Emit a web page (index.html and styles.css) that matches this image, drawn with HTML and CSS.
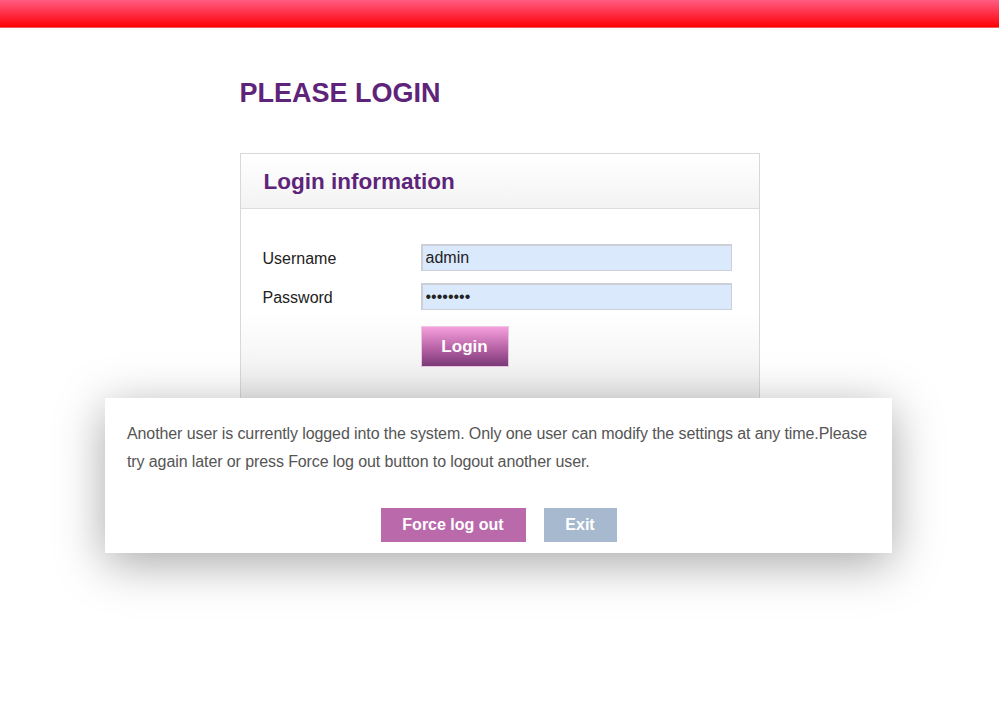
FILE: index.html
```html
<!DOCTYPE html>
<html lang="en">

<head>
    <meta charset="UTF-8">
    <meta name="viewport" content="width=device-width, initial-scale=1.0">
    <title>Login</title>

    <link rel="stylesheet" href="styles.css">

</head>

<body>
    <div class="top-bar"></div>

    <div class="page">
        <h1 class="page-title">PLEASE LOGIN</h1>

        <div class="login-box">
            <div class="login-header">
                <h2>Login information</h2>
            </div>

            <div class="login-body">
                <div class="form-row">
                    <label for="username">Username</label>
                    <input type="text" id="username" class="text-input" value="admin">
                </div>
                <div class="form-row">
                    <label for="password">Password</label>
                    <input type="password" id="password" class="text-input" value="password">
                </div>
                <div class="form-row">
                    <span class="label-space"></span>
                    <button class="login-button">Login</button>
                </div>
            </div>
        </div>
    </div>

    <div class="dialog">
        <p class="dialog-text">Another user is currently logged into the system. Only one user can modify the settings at any time.Please try again later or press Force log out button to logout another user.</p>
        <div class="dialog-buttons">
            <button class="force-button">Force log out</button>
            <button class="exit-button">Exit</button>
        </div>
    </div>
</body>

</html>
```

FILE: styles.css
```css
* {
    font-family: "Liberation Sans", Arial, sans-serif;
    box-sizing: border-box;
}

body {
    margin: 0;
    background-color: #fff;
}

.top-bar {
    height: 28px;
    background: linear-gradient(to bottom, #ff5b82, #ff0a14 90%, #ff0000);
    border-bottom: 1px solid #f45a64;
}

.page {
    width: 520px;
    margin: 0 auto;
    padding-top: 50px;
}

.page-title {
    margin: 0;
    font-size: 27px;
    color: #5e2479;
    height: 75px;
}

.login-box {
    border: 1px solid #d8d8d8;
    height: 290px;
    background: linear-gradient(to bottom, #fff 55%, #e6e6e6);
}

.login-header {
    height: 55px;
    padding-left: 23px;
    background: linear-gradient(to bottom, #fff, #f3f3f3);
    border-bottom: 1px solid #dddddd;
}

.login-header h2 {
    margin: 0;
    padding-top: 15px;
    font-size: 22.5px;
    color: #5e2479;
}

.login-body {
    padding: 35px 0 0 22px;
}

.form-row {
    display: flex;
    align-items: center;
    margin-bottom: 12px;
}

.form-row label,
.label-space {
    width: 158px;
    padding-top: 3px;
    font-size: 16px;
    color: #222;
}

.text-input {
    width: 311px;
    height: 27px;
    font-size: 16px;
    padding: 0 3px;
    background-color: #dbe9fc;
    border: 2px solid #ccd0d6;
    border-width: 2px 1px 1px 2px;
    color: #222;
}

.login-button {
    margin-top: 4px;
    width: 88px;
    height: 41px;
    border: 1px solid #e9c7e0;
    background: linear-gradient(to bottom, #f59fdc, #b762a6 55%, #7c3b78);
    color: #fff;
    font-size: 17px;
    font-weight: bold;
}

.dialog {
    position: absolute;
    left: 105px;
    top: 398px;
    width: 787px;
    height: 155px;
    background-color: #fff;
    box-shadow: 0 10px 45px rgba(0, 0, 0, 0.35);
    padding: 22px 22px 0 22px;
}

.dialog-text {
    margin: 0 -10px 0 0;
    font-size: 16px;
    letter-spacing: -0.1px;
    line-height: 28px;
    color: #555;
}

.dialog-buttons {
    display: flex;
    justify-content: center;
    gap: 18px;
    margin-top: 32px;
}

.dialog-buttons button {
    height: 34px;
    border: 1px solid transparent;
    color: #fff;
    font-size: 16px;
    font-weight: bold;
}

.force-button {
    width: 145px;
    background-color: #ba6aab;
    border-color: #d59ccb;
}

.exit-button {
    width: 73px;
    background-color: #a6b9ce;
    border-color: #c2d1e0;
}
```
